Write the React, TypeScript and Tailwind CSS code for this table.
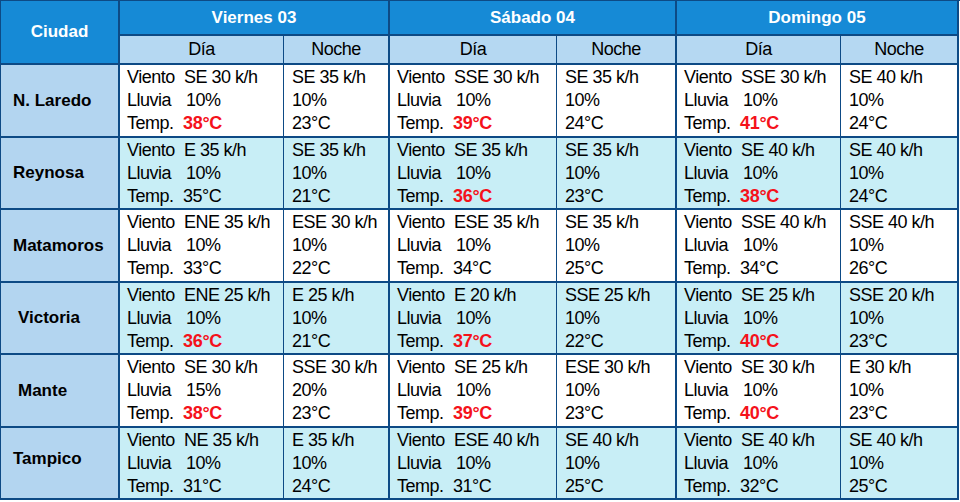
import React from 'react'

type Cell = { wind: string; rain: string; temp: string; hot?: boolean }
type Day = { day: Cell; night: Cell }
type Row = { city: string; indent?: string; shade: boolean; days: Day[] }

const c = (wind: string, rain: string, temp: string, hot = false): Cell => ({ wind, rain, temp, hot })

const rows: Row[] = [
  {
    city: 'N. Laredo',
    shade: false,
    days: [
      { day: c('SE 30 k/h', '10%', '38°C', true), night: c('SE 35 k/h', '10%', '23°C') },
      { day: c('SSE 30 k/h', '10%', '39°C', true), night: c('SE 35 k/h', '10%', '24°C') },
      { day: c('SSE 30 k/h', '10%', '41°C', true), night: c('SE 40 k/h', '10%', '24°C') },
    ],
  },
  {
    city: 'Reynosa',
    shade: true,
    days: [
      { day: c('E 35 k/h', '10%', '35°C'), night: c('SE 35 k/h', '10%', '21°C') },
      { day: c('SE 35 k/h', '10%', '36°C', true), night: c('SE 35 k/h', '10%', '23°C') },
      { day: c('SE 40 k/h', '10%', '38°C', true), night: c('SE 40 k/h', '10%', '24°C') },
    ],
  },
  {
    city: 'Matamoros',
    shade: false,
    days: [
      { day: c('ENE 35 k/h', '10%', '33°C'), night: c('ESE 30 k/h', '10%', '22°C') },
      { day: c('ESE 35 k/h', '10%', '34°C'), night: c('SE 35 k/h', '10%', '25°C') },
      { day: c('SSE 40 k/h', '10%', '34°C'), night: c('SSE 40 k/h', '10%', '26°C') },
    ],
  },
  {
    city: 'Victoria',
    indent: 'pl-[17px]',
    shade: true,
    days: [
      { day: c('ENE 25 k/h', '10%', '36°C', true), night: c('E 25 k/h', '10%', '21°C') },
      { day: c('E 20 k/h', '10%', '37°C', true), night: c('SSE 25 k/h', '10%', '22°C') },
      { day: c('SE 25 k/h', '10%', '40°C', true), night: c('SSE 20 k/h', '10%', '23°C') },
    ],
  },
  {
    city: 'Mante',
    indent: 'pl-[17px]',
    shade: false,
    days: [
      { day: c('SE 30 k/h', '15%', '38°C', true), night: c('SSE 30 k/h', '20%', '23°C') },
      { day: c('SE 25 k/h', '10%', '39°C', true), night: c('ESE 30 k/h', '10%', '23°C') },
      { day: c('SE 30 k/h', '10%', '40°C', true), night: c('E 30 k/h', '10%', '23°C') },
    ],
  },
  {
    city: 'Tampico',
    shade: true,
    days: [
      { day: c('NE 35 k/h', '10%', '31°C'), night: c('E 35 k/h', '10%', '24°C') },
      { day: c('ESE 40 k/h', '10%', '31°C'), night: c('SE 40 k/h', '10%', '25°C') },
      { day: c('SE 40 k/h', '10%', '32°C'), night: c('SE 40 k/h', '10%', '25°C') },
    ],
  },
]

const days = ['Viernes 03', 'Sábado 04', 'Domingo 05']

function Temp({ cell }: { cell: Cell }) {
  return cell.hot ? <span className="font-bold text-[#f5121b] tracking-[-0.3px]">{cell.temp}</span> : <span>{cell.temp}</span>
}

function DayCell({ cell, bg }: { cell: Cell; bg: string }) {
  return (
    <div className={`${bg} border-r border-b-2 border-[#0d4a85] pl-[7px] flex flex-col justify-center leading-[23px]`}>
      <div className="flex">
        <span className="w-[57px]">Viento</span>
        <span>{cell.wind}</span>
      </div>
      <div className="flex">
        <span className="w-[59px]">Lluvia</span>
        <span>{cell.rain}</span>
      </div>
      <div className="flex">
        <span className="w-[56px]">Temp.</span>
        <Temp cell={cell} />
      </div>
    </div>
  )
}

function NightCell({ cell, bg }: { cell: Cell; bg: string }) {
  return (
    <div className={`${bg} border-r-2 border-b-2 border-[#0d4a85] pl-[8px] flex flex-col justify-center leading-[23px]`}>
      <div>{cell.wind}</div>
      <div>{cell.rain}</div>
      <div>{cell.temp}</div>
    </div>
  )
}

export default function App() {
  return (
    <div className="w-[960px] h-[502px] bg-white font-['Liberation_Sans',Arial,sans-serif] text-[18px] tracking-[-0.5px] text-black">
      <div className="grid grid-cols-[119px_164px_106px_167px_120px_164px_118px] grid-rows-[35px_29px_73px_72px_73px_72px_73px_72px] border-l border-t border-[#0d4a85]">
        <div className="row-span-2 bg-[#168ad6] border-r-2 border-b-2 border-[#0d4a85] flex items-center justify-center text-white font-bold text-[17px] tracking-normal">
          Ciudad
        </div>
        {days.map((d) => (
          <div
            key={d}
            className="col-span-2 bg-[#168ad6] border-r-2 border-b-2 border-[#0d4a85] flex items-center justify-center text-white font-bold text-[17px] tracking-normal"
          >
            {d}
          </div>
        ))}
        {days.map((d) => (
          <React.Fragment key={d + 'sub'}>
            <div className="bg-[#b5d8f2] border-r border-b-2 border-[#0d4a85] flex items-center justify-center">Día</div>
            <div className="bg-[#b5d8f2] border-r-2 border-b-2 border-[#0d4a85] flex items-center justify-center">Noche</div>
          </React.Fragment>
        ))}
        {rows.map((r) => {
          const bg = r.shade ? 'bg-[#c8eef6]' : 'bg-white'
          return (
            <React.Fragment key={r.city}>
              <div
                className={`bg-[#b3d5f0] border-r-2 border-b-2 border-[#0d4a85] flex items-center ${r.indent ?? 'pl-[12px]'} ${
                  r.city === 'Tampico' ? 'pb-[8px]' : ''
                } font-bold text-[17px] tracking-normal`}
              >
                {r.city}
              </div>
              {r.days.map((d, i) => (
                <React.Fragment key={i}>
                  <DayCell cell={d.day} bg={bg} />
                  <NightCell cell={d.night} bg={bg} />
                </React.Fragment>
              ))}
            </React.Fragment>
          )
        })}
      </div>
    </div>
  )
}
